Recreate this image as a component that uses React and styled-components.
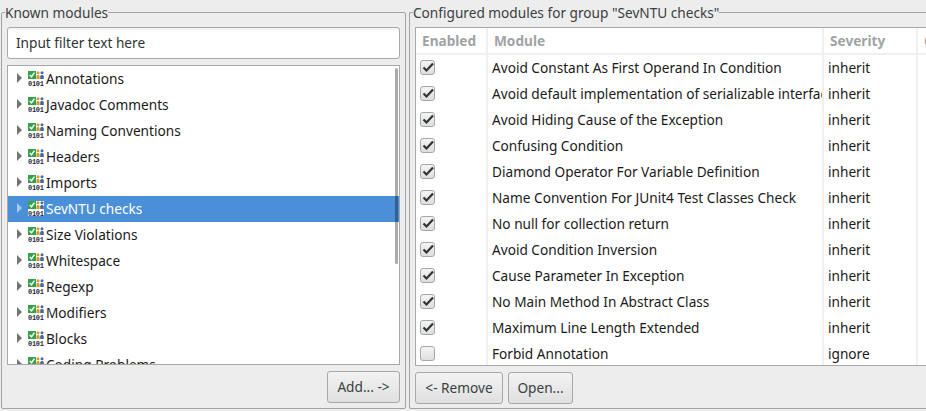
import styled, { createGlobalStyle } from "styled-components"

const Global = createGlobalStyle`
    html, body {
        margin: 0;
        padding: 0;
        height: 100%;
        overflow: hidden;
        background: #ededed;
    }
`

const Page = styled.div`
    width: 926px;
    height: 411px;
    display: grid;
    grid-template-columns: 405px 1fr;
    column-gap: 3px;
    padding: 3px 0 0 1px;
    box-sizing: border-box;
    overflow: hidden;
    background: #ededed;
    color: #2e3436;
    font-family: "Noto Sans", sans-serif;
    font-size: 13.65px;
`

const Group = styled.fieldset`
    margin: 0;
    min-width: 0;
    height: 406px;
    box-sizing: border-box;
    border: 1px solid #a3a3a3;
    border-right: ${(p) => (p.$open ? "none" : "1px solid #a3a3a3")};
    border-radius: 2px;
    padding: 5px ${(p) => (p.$open ? "0" : "5px")} 4px 5px;
    display: flex;
    flex-direction: column;
    width: ${(p) => (p.$open ? "540px" : "auto")};
`

const Caption = styled.legend`
    padding: 0;
    margin-left: -2px;
    height: 19px;
    line-height: 19px;
    color: #3a3f41;
`

const FilterInput = styled.div`
    height: 32px;
    box-sizing: border-box;
    border: 1px solid #a8a8a8;
    border-radius: 3px;
    background: linear-gradient(#f3f3f3, #ffffff 5px);
    padding-left: 8px;
    line-height: 30px;
    margin-bottom: 6px;
    color: #2e3436;
`

const Tree = styled.div`
    position: relative;
    height: 300px;
    flex: none;
    box-sizing: border-box;
    border: 1px solid #a8a8a8;
    background: #fff;
    overflow: hidden;
`

const TreeRow = styled.div`
    height: 26px;
    box-sizing: border-box;
    padding: 0 0 2px 9px;
    display: flex;
    align-items: center;
    color: ${(p) => (p.$selected ? "#ffffff" : "#1a1a1a")};
    background: ${(p) => (p.$selected ? "#4a90d9" : "transparent")};
`

const Arrow = styled.span`
    width: 0;
    height: 0;
    border-top: 5px solid transparent;
    border-bottom: 5px solid transparent;
    border-left: 5px solid ${(p) => (p.$selected ? "#a5c8ee" : "#757575")};
    margin-right: 6px;
`

const Scrollbar = styled.div`
    position: absolute;
    top: 2px;
    right: 1px;
    width: 3px;
    height: 196px;
    border-radius: 2px;
    background: rgba(0, 0, 0, 0.33);
`

const ButtonRow = styled.div`
    display: flex;
    gap: 5px;
    margin-top: 6px;
    justify-content: ${(p) => (p.$end ? "flex-end" : "flex-start")};
`

const Button = styled.div`
    width: ${(p) => p.$width}px;
    height: 32px;
    box-sizing: border-box;
    border: 1px solid #a8a8a8;
    border-radius: 3px;
    background: linear-gradient(#f2f2f2, #e0e0e0);
    text-align: center;
    line-height: 30px;
    color: #3a3f41;
    white-space: nowrap;
`

const TableFrame = styled.div`
    height: 339px;
    flex: none;
    width: 520px;
    box-sizing: border-box;
    border: 1px solid #a8a8a8;
    border-right: none;
    background: #fff;
    overflow: hidden;
`

const Table = styled.table`
    border-collapse: separate;
    border-spacing: 0;
    table-layout: fixed;
    width: 560px;
`

const Head = styled.th`
    height: 27px;
    padding: 0 0 0 6px;
    box-sizing: border-box;
    text-align: left;
    font-weight: 700;
    color: #a0a3a5;
    border-right: 2px solid #f0f0f0;
    border-bottom: 2px solid #f0f0f0;
    overflow: hidden;
    white-space: nowrap;
`

const Cell = styled.td`
    height: 26px;
    padding: 0 0 ${(p) => (p.$box ? 1 : 2)}px 4px;
    box-sizing: border-box;
    color: #1a1a1a;
    border-right: ${(p) => (p.$plain ? "none" : "2px solid #f0f0f0")};
    overflow: hidden;
    white-space: nowrap;
`

const Check = styled.span`
    display: block;
    width: 15px;
    height: 15px;
    box-sizing: border-box;
    border: 1px solid #a8a8a8;
    border-radius: 3px;
    background: linear-gradient(#f4f4f4, #dedede);
    position: relative;

    svg {
        position: absolute;
        left: 0;
        top: -1px;
    }
`

const IconGraphic = styled.svg`
    flex: none;
    margin-right: 2px;
`

const ModuleIcon = () => (
    <IconGraphic width="16" height="15" viewBox="0 0 16 15">
        <rect width="16" height="15" fill="#fff" />
        <rect x="0" y="0" width="8" height="8" fill="#35a24a" />
        <path d="M1.8 4l1.7 1.8L6.4 1.6" fill="none" stroke="#fff" strokeWidth="1.4" />
        <circle cx="10" cy="1.8" r="1.5" fill="#d69a2d" />
        <path d="M8.4 8V5.5c0-2 3.2-2 3.2 0V8z" fill="#d69a2d" />
        <circle cx="14" cy="1.8" r="1.5" fill="#4468a8" />
        <path d="M12.2 8V5.5c0-2 3.6-2 3.6 0V8z" fill="#4468a8" />
        <text x="0" y="14.5" fontFamily="'Liberation Mono', monospace" fontSize="7" fontWeight="700" textLength="16" fill="#1f2a38">
            0101
        </text>
    </IconGraphic>
)

const TickMark = () => (
    <svg width="14" height="14" viewBox="0 0 14 14">
        <path d="M2.5 7.5l3 3L12 3.5" fill="none" stroke="#2e3436" strokeWidth="2.2" />
    </svg>
)

const knownModules = [
    "Annotations",
    "Javadoc Comments",
    "Naming Conventions",
    "Headers",
    "Imports",
    "SevNTU checks",
    "Size Violations",
    "Whitespace",
    "Regexp",
    "Modifiers",
    "Blocks",
    "Coding Problems",
]

const configured = [
    ["Avoid Constant As First Operand In Condition", "inherit", true],
    ["Avoid default implementation of serializable interface", "inherit", true],
    ["Avoid Hiding Cause of the Exception", "inherit", true],
    ["Confusing Condition", "inherit", true],
    ["Diamond Operator For Variable Definition", "inherit", true],
    ["Name Convention For JUnit4 Test Classes Check", "inherit", true],
    ["No null for collection return", "inherit", true],
    ["Avoid Condition Inversion", "inherit", true],
    ["Cause Parameter In Exception", "inherit", true],
    ["No Main Method In Abstract Class", "inherit", true],
    ["Maximum Line Length Extended", "inherit", true],
    ["Forbid Annotation", "ignore", false],
]

const App = () => {
    return (
        <Page>
            <Global />
            <Group>
                <Caption>Known modules</Caption>
                <FilterInput>Input filter text here</FilterInput>
                <Tree>
                    {knownModules.map((name) => {
                        const selected = name === "SevNTU checks"
                        return (
                            <TreeRow key={name} $selected={selected}>
                                <Arrow $selected={selected} />
                                <ModuleIcon />
                                {name}
                            </TreeRow>
                        )
                    })}
                    <Scrollbar />
                </Tree>
                <ButtonRow $end>
                    <Button $width={73}>Add... -&gt;</Button>
                </ButtonRow>
            </Group>
            <Group $open>
                <Caption>Configured modules for group "SevNTU checks"</Caption>
                <TableFrame>
                    <Table>
                        <colgroup>
                            <col width="72" />
                            <col width="336" />
                            <col width="94" />
                            <col width="58" />
                        </colgroup>
                        <thead>
                            <tr>
                                <Head>Enabled</Head>
                                <Head>Module</Head>
                                <Head>Severity</Head>
                                <Head>Comment</Head>
                            </tr>
                        </thead>
                        <tbody>
                            {configured.map(([name, severity, on]) => (
                                <tr key={name}>
                                    <Cell $box>
                                        <Check>{on && <TickMark />}</Check>
                                    </Cell>
                                    <Cell>{name}</Cell>
                                    <Cell>{severity}</Cell>
                                    <Cell $plain />
                                </tr>
                            ))}
                        </tbody>
                    </Table>
                </TableFrame>
                <ButtonRow>
                    <Button $width={88}>&lt;- Remove</Button>
                    <Button $width={65}>Open...</Button>
                </ButtonRow>
            </Group>
        </Page>
    )
}

export default App
